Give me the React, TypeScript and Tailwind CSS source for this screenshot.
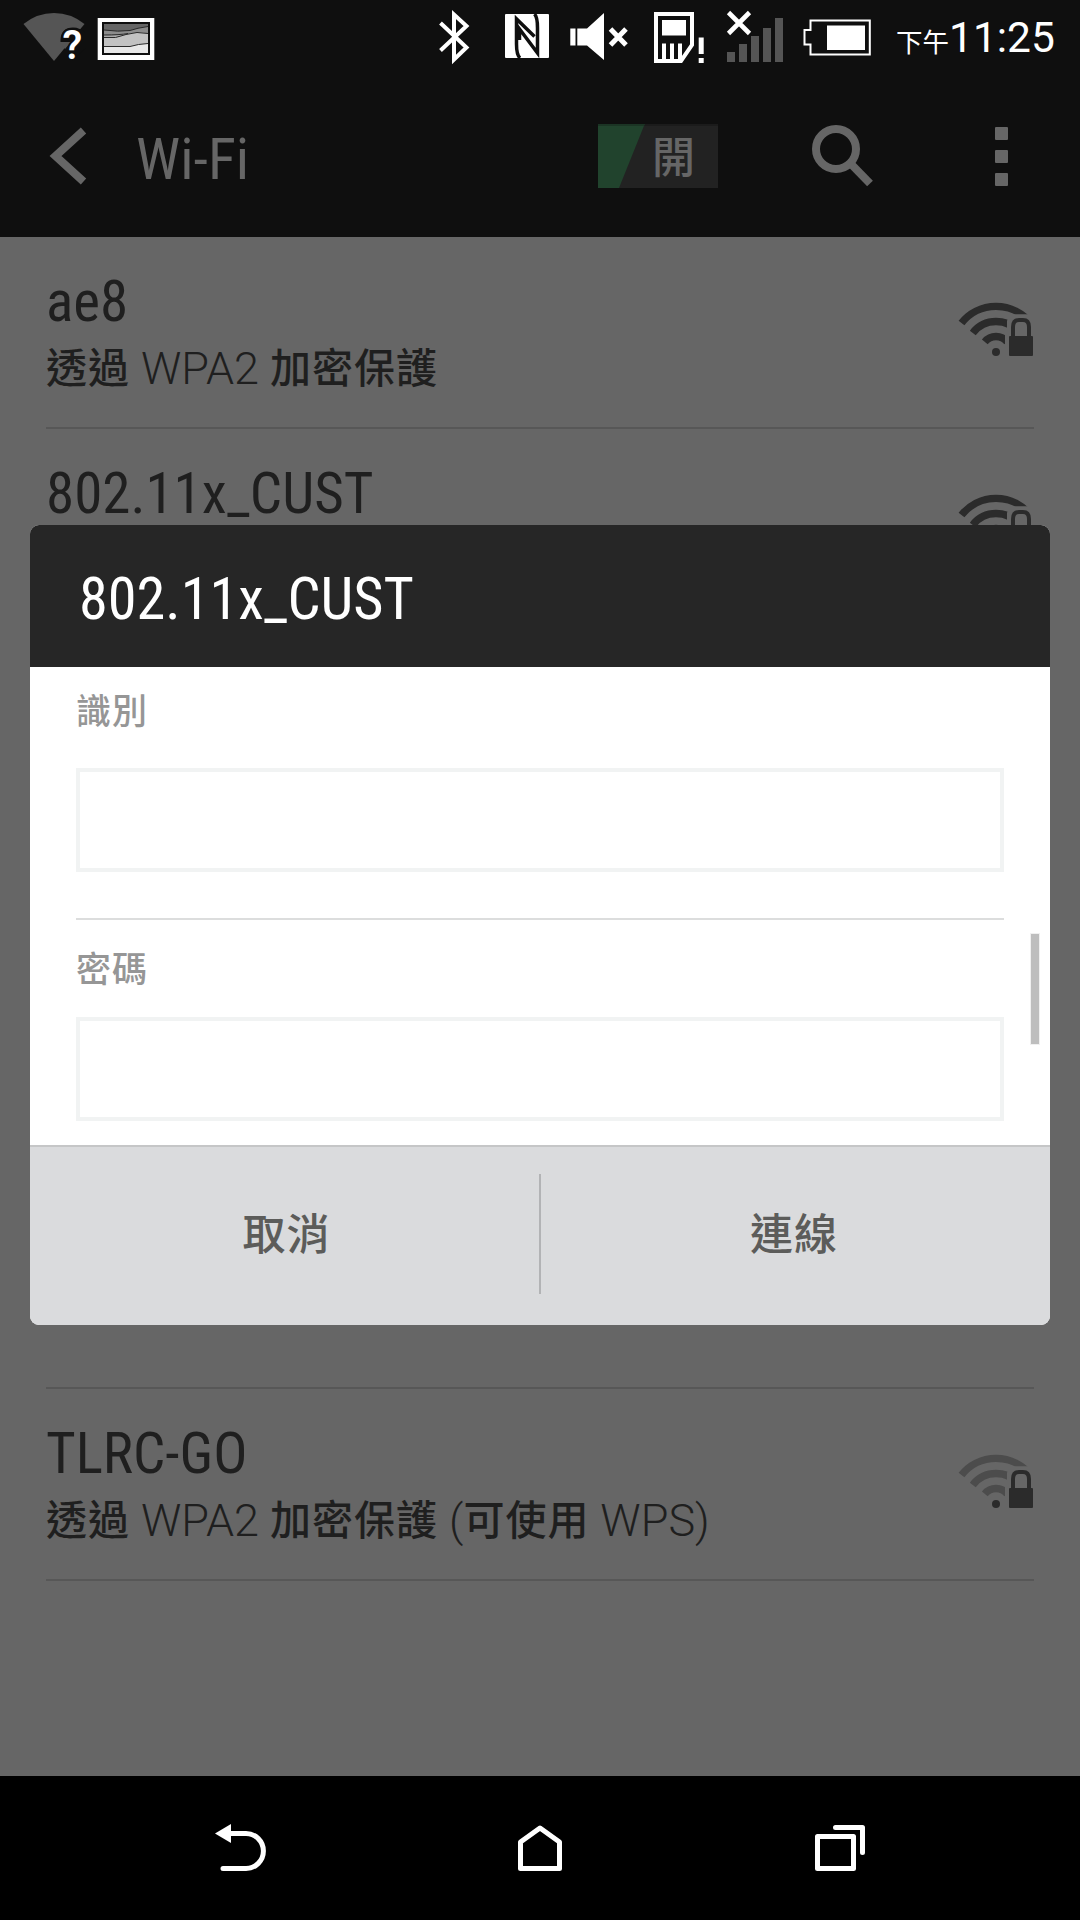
import type { ReactNode } from "react";

const CJK = "font-['Noto_Sans_CJK_TC',sans-serif]";
const CONDENSED = "font-['Roboto_Condensed','Roboto',sans-serif]";

function Han({ children }: { children: ReactNode }) {
  return (
    <span className="align-[1.5px] font-['Noto_Sans_CJK_TC',sans-serif] text-[41px] leading-none font-medium tracking-[1px]">
      {children}
    </span>
  );
}

function StatusIcon({ x, width, className = "", children }: { x: number; width: number; className?: string; children: ReactNode }) {
  return (
    <svg width={width} height={75} viewBox={`${x} 0 ${width} 75`} className={`shrink-0 ${className}`}>
      {children}
    </svg>
  );
}

function StatusBar() {
  return (
    <div className="flex h-[75px] items-start pl-[22px] text-white">
      <StatusIcon x={22} width={64}>
        <path d="M54 61 L23.500 24 Q37 13 54 13 T84.500 24 Z" fill="#555" />
        <path d="M60.500 42 V40 Q61 27.500 73 27.500 Q80 27.500 86 33 V48 L72 61 V42 Z" fill="#0f0f0f" />
        <path d="M60 42 h11 l-6 7 Z" fill="#555" />
        <text x="62.500" y="59" fill="#fff" fontFamily="Roboto" fontWeight="600" fontSize="40" stroke="#0f0f0f" strokeWidth="4" paintOrder="stroke">?</text>
      </StatusIcon>
      <StatusIcon x={97} width={58} className="ml-[11px]">
        <rect x="97.700" y="18" width="56.600" height="42" fill="#fff" />
        <rect x="102" y="22" width="48" height="33" fill="#0f0f0f" />
        <rect x="104" y="24" width="44" height="29" fill="#666" />
        <path d="M104 30 Q118 32 130 30.500 Q137 28 148 26.500 V53 H104 Z" fill="#8c8c8c" />
        <path d="M104 35 Q120 36 128 33 V53 H104 Z" fill="#aaa" />
        <path d="M104 37.500 Q116 39 126 34.500 Q137 31 148 33.500 V53 H104 Z" fill="#c2c2c2" />
        <path d="M104 46.500 H130 Q138 44 148 43.500 V53 H104 Z" fill="#e8e8e8" />
        <g fill="none" stroke="#2a2a2a" strokeWidth="1">
          <path d="M104 30 Q118 32 130 30.500 Q137 28 148 26.500" />
          <path d="M104 35 Q120 35 128 33.500" />
          <path d="M104 37.500 Q116 39 126 34.500 Q137 31 148 33.500" />
          <path d="M104 46.500 H130 Q138 44 148 43.500" />
        </g>
      </StatusIcon>
      <StatusIcon x={438} width={32} className="ml-[283px]">
        <path d="M440.500 23 L466.500 47.500 L454 59.500 V14.500 L466.500 26 L440.500 50.500" fill="none" stroke="#fff" strokeWidth="4" />
      </StatusIcon>
      <StatusIcon x={505} width={44} className="ml-[35px]">
        <rect x="505" y="14" width="44" height="44" rx="1" fill="#fff" />
        <g fill="none" stroke="#0f0f0f" strokeWidth="3.500">
          <path d="M520 58 Q516.500 55 516.500 44 V19 L534.500 36.500" />
          <path d="M534.500 14 Q537.500 17 537.500 28 V53 L519.500 29 V40" />
        </g>
      </StatusIcon>
      <StatusIcon x={570} width={58} className="ml-[21px]">
        <path d="M570.300 28.500 h5.200 v17 h-5.200 Z M577.300 28.500 H587 L604 13 V60 L587 45.500 H577.300 Z" fill="#fff" />
        <path d="M610.500 29 L626 45 M626 29 L610.500 45" stroke="#fff" strokeWidth="5" />
      </StatusIcon>
      <StatusIcon x={654} width={50} className="ml-[26px]">
        <path d="M656 14 H692 V45 L681 61 H656 Z" fill="none" stroke="#fff" strokeWidth="4" />
        <path d="M662 20 h24 v15.500 h-24 Z M662 43.500 h4 V60 h-4 Z M670 43.500 h4 V60 h-4 Z M678 43.500 h4 V60 h-4 Z" fill="#fff" />
        <path d="M698.700 37.500 h5 v16.500 h-5 Z M698.700 58 h5 v5 h-5 Z" fill="#fff" />
      </StatusIcon>
      <StatusIcon x={726} width={58} className="ml-[22px]">
        <path d="M727 52 h8 v10 h-8 Z M739 44 h8 v18 h-8 Z M751 36 h8 v26 h-8 Z M763 28 h8 v34 h-8 Z M775 18 h8 v44 h-8 Z" fill="#555" />
        <path d="M728.500 12.500 L749.500 33.500 M749.500 12.500 L728.500 33.500" stroke="#fff" strokeWidth="4.600" />
      </StatusIcon>
      <StatusIcon x={803} width={69} className="ml-[19px]">
        <path d="M810.500 20.500 H869.800 V54.500 H810.500 V44.500 H804.500 V30 H810.500 Z" fill="none" stroke="#fff" strokeWidth="2" />
        <rect x="827" y="25.500" width="38" height="24.500" fill="#fff" />
      </StatusIcon>
      <div className="ml-[24px] flex items-baseline whitespace-nowrap pt-[12px]">
        <span className={`${CJK} text-[26.5px] leading-none font-normal`}>下午</span>
        <span className="font-['Roboto',sans-serif] text-[42.5px] leading-[51px]">11:25</span>
      </div>
    </div>
  );
}

function ActionBar() {
  return (
    <div className="flex h-[162px] items-center pl-[49px] text-[#666]">
      <svg width="38" height="58" viewBox="49 127 38 58">
        <path d="M83.500 130.500 L55.500 156 L83.500 181.500" fill="none" stroke="#666" strokeWidth="8" />
      </svg>
      <h1 className={`${CONDENSED} ml-[49px] w-[462px] pt-[6px] text-[58px] leading-[64px]`}>Wi-Fi</h1>
      <div className="relative flex h-[64px] w-[120px] justify-end border-t-2 border-[#1b1b1b] bg-[#222] pr-[23px]">
        <svg className="absolute -top-[2px] left-0" width="48" height="64" viewBox="0 0 48 64">
          <path d="M0 0 H46.700 L21 64 H0 Z" fill="#21432d" />
          <path d="M0 0 H46.700 L46 2 H0 Z" fill="#1b3424" />
        </svg>
        <span className={`${CJK} mt-[6px] text-[43px] leading-[44px] font-medium`}>開</span>
      </div>
      <svg className="ml-[93px]" width="64" height="64" viewBox="811 124 64 64">
        <circle cx="836" cy="149" r="20" fill="none" stroke="#666" strokeWidth="8" />
        <path d="M852 165 L870 183.500" stroke="#666" strokeWidth="8" />
      </svg>
      <div className="ml-[120px] flex flex-col gap-[10px] pt-px">
        <i className="size-[13px] rounded-[1px] bg-[#666]" />
        <i className="size-[13px] rounded-[1px] bg-[#666]" />
        <i className="size-[13px] rounded-[1px] bg-[#666]" />
      </div>
    </div>
  );
}

function WifiLock({ weak = false }: { weak?: boolean }) {
  return (
    <svg width="76" height="56" viewBox="958 302 76 56" className="mt-[65px] shrink-0">
      <mask id="lock-gap" maskUnits="userSpaceOnUse" x="950" y="295" width="90" height="70">
        <rect x="950" y="295" width="90" height="70" fill="#fff" />
        <path d="M1005 365 V333 L1007 330 V321 Q1008 315 1014 314.300 H1040 V365 Z" fill="#000" />
      </mask>
      <g mask="url(#lock-gap)" fill="none" stroke={weak ? "#4c4c4c" : "#2b2b2b"} strokeWidth="7.400">
        <path d="M961.500 323 A44.100 44.100 0 0 1 1030.500 323" />
        <path d="M972.800 332.900 A29.400 29.400 0 0 1 1019.200 332.900" />
        <path d="M984.800 341.800 A14.400 14.400 0 0 1 1007.200 341.800" />
      </g>
      <circle cx="996" cy="352" r="4" fill="#2b2b2b" />
      <rect x="1009" y="336" width="24" height="20" rx="1" fill="#2b2b2b" />
      <path d="M1013 337 V327 Q1013 320 1019 320 H1023 Q1029 320 1029 327 V337" fill="none" stroke="#2b2b2b" strokeWidth="4" />
    </svg>
  );
}

function NetworkRow({ name, weak, children }: { name: string; weak?: boolean; children: ReactNode }) {
  return (
    <li className="flex h-[192px] items-start justify-between border-b-2 border-[#575757] text-[#1f1f1f]">
      <div className="pt-[33px]">
        <div className={`${CONDENSED} text-[57px] leading-[64px]`}>{name}</div>
        <div className="mt-[10px] font-['Roboto',sans-serif] text-[45px] leading-[50px] font-light whitespace-nowrap">
          {children}
        </div>
      </div>
      <WifiLock weak={weak} />
    </li>
  );
}

function Dialog() {
  return (
    <div className="absolute top-[525px] left-[30px] flex h-[800px] w-[1020px] flex-col overflow-hidden rounded-[9px] bg-white">
      <div className={`${CONDENSED} h-[142px] bg-[#262626] pt-[42px] pl-[49px] text-[58.3px] leading-[64px] text-white`}>
        802.11x_CUST
      </div>
      <div className={`${CJK} relative flex h-[478px] flex-col px-[46px] pt-[24px] text-[#969696]`}>
        <label className="text-[35px] leading-[36px] font-medium tracking-[1px]">識別</label>
        <input className="mt-[41px] h-[104px] w-full border-4 border-[#f1f3f3] outline-none" />
        <div className="mt-[46px] h-[2px] bg-[#dcdddd]" />
        <label className="mt-[29px] text-[35px] leading-[36px] font-medium tracking-[1px]">密碼</label>
        <input type="password" className="mt-[32px] h-[104px] w-full border-4 border-[#f1f3f3] outline-none" />
        <div className="absolute top-[266px] right-[10px] h-[112px] w-[10px] border border-[#f0f0f0] bg-[#bebebe]" />
      </div>
      <div className={`${CJK} flex h-[180px] items-start border-t-2 border-[#c5c6c7] bg-[#dadbdd] text-[43px] leading-[44px] font-medium text-[#5c5c5a]`}>
        <button className="mt-[62px] w-[509px] pl-[4px] tracking-[1px]">取消</button>
        <div className="mt-[27px] h-[120px] w-[2px] bg-[#b2b3b5]" />
        <button className="mt-[62px] w-[509px] pr-[3px] tracking-[1px]">連線</button>
      </div>
    </div>
  );
}

function NavBar() {
  return (
    <div className="flex h-[144px] items-center bg-black pl-[214px]">
      <svg width="54" height="48" viewBox="214 1824 54 48">
        <path d="M215 1833.500 L231 1824 V1843 Z" fill="#fff" />
        <path d="M230 1833.500 H246 A17.400 17.500 0 0 1 246 1868.500 H223" fill="none" stroke="#fff" strokeWidth="5" strokeLinecap="round" />
      </svg>
      <svg className="ml-[249px]" width="46" height="48" viewBox="517 1824 46 48">
        <path d="M520.500 1868.500 V1842 L540 1828 L559.500 1842 V1868.500 Z" fill="none" stroke="#fff" strokeWidth="5" strokeLinejoin="round" />
      </svg>
      <svg className="ml-[251px]" width="52" height="48" viewBox="814 1824 52 48">
        <g fill="none" stroke="#fff" strokeWidth="5" strokeLinejoin="round" strokeLinecap="round">
          <path d="M817.500 1836.500 H853.500 V1868.500 H817.500 Z" />
          <path d="M835.500 1827.500 H862.500 V1852.500" />
        </g>
      </svg>
    </div>
  );
}

export default function App() {
  return (
    <div className="relative flex h-[1920px] w-[1080px] flex-col overflow-hidden bg-[#666]">
      <header className="h-[237px] shrink-0 bg-[#0f0f0f]">
        <StatusBar />
        <ActionBar />
      </header>
      <ul className="flex-1 px-[46px]">
        <NetworkRow name="ae8">
          <Han>透過</Han> WPA2 <Han>加密保護</Han>
        </NetworkRow>
        <NetworkRow name="802.11x_CUST">{null}</NetworkRow>
        <li className="h-[768px] border-b-2 border-[#575757]" />
        <NetworkRow name="TLRC-GO" weak>
          <Han>透過</Han> WPA2 <Han>加密保護</Han> (<Han>可使用</Han> WPS)
        </NetworkRow>
      </ul>
      <NavBar />
      <Dialog />
    </div>
  );
}
